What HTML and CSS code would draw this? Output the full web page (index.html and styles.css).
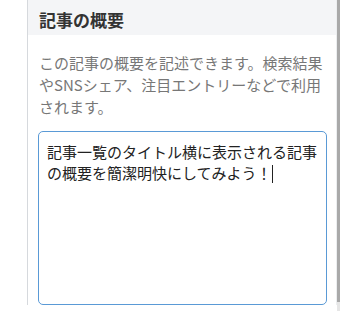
FILE: index.html
```html
<!DOCTYPE html>
<html lang="ja">
<head>
<meta charset="utf-8">
<link rel="stylesheet" href="styles.css">
</head>
<body>
<div class="page">
  <div class="gutter"></div>
  <section class="panel">
    <h2 class="panel-head">記事の概要</h2>
    <div class="panel-body">
      <p class="desc">この記事の概要を記述できます。検索結果やSNSシェア、注目エントリーなどで利用されます。</p>
      <div class="textarea">記事一覧のタイトル横に表示される記事の概要を簡潔明快にしてみよう！<span class="caret"></span></div>
    </div>
  </section>
  <div class="scrollbar"><div class="thumb"></div></div>
</div>
</body>
</html>
```
FILE: styles.css
```css
html, body {
  margin: 0;
  padding: 0;
  background: #fff;
}
body {
  font-family: "Noto Sans CJK JP", "Noto Sans", sans-serif;
  width: 340px;
  height: 311px;
  overflow: hidden;
}
.page {
  display: flex;
  height: 311px;
}
.gutter {
  width: 27px;
  flex: none;
}
.panel {
  width: 308px;
  height: 305px;
  flex: none;
  border-left: 1px solid #d6d9dd;
  border-right: 1px solid #eceef0;
  display: flex;
  flex-direction: column;
}
.panel-head {
  margin: 0;
  height: 35px;
  box-sizing: border-box;
  background: #f4f5f7;
  padding: 8px 0 0 11px;
  font-size: 17px;
  line-height: 24px;
  font-weight: bold;
  color: #333;
}
.panel-body {
  padding: 17px 8px 0 11px;
  display: flex;
  flex-direction: column;
  flex: 1;
}
.desc {
  margin: 0;
  font-size: 15px;
  line-height: 22px;
  color: #777;
}
.textarea {
  margin: 13px 0 0 -1px;
  width: 289px;
  flex: 1;
  box-sizing: border-box;
  border: 1px solid #5a9ad6;
  border-radius: 5px;
  padding: 9px 8px 0 8px;
  font-size: 15px;
  line-height: 21px;
  color: #222;
}
.caret {
  display: inline-block;
  width: 0;
  height: 18px;
  border-left: 1px solid #222;
  vertical-align: -4px;
}
.scrollbar {
  width: 4px;
  flex: none;
  background: #e6e6e6;
}
.thumb {
  height: 302px;
  background: #a9a9a9;
}
```
